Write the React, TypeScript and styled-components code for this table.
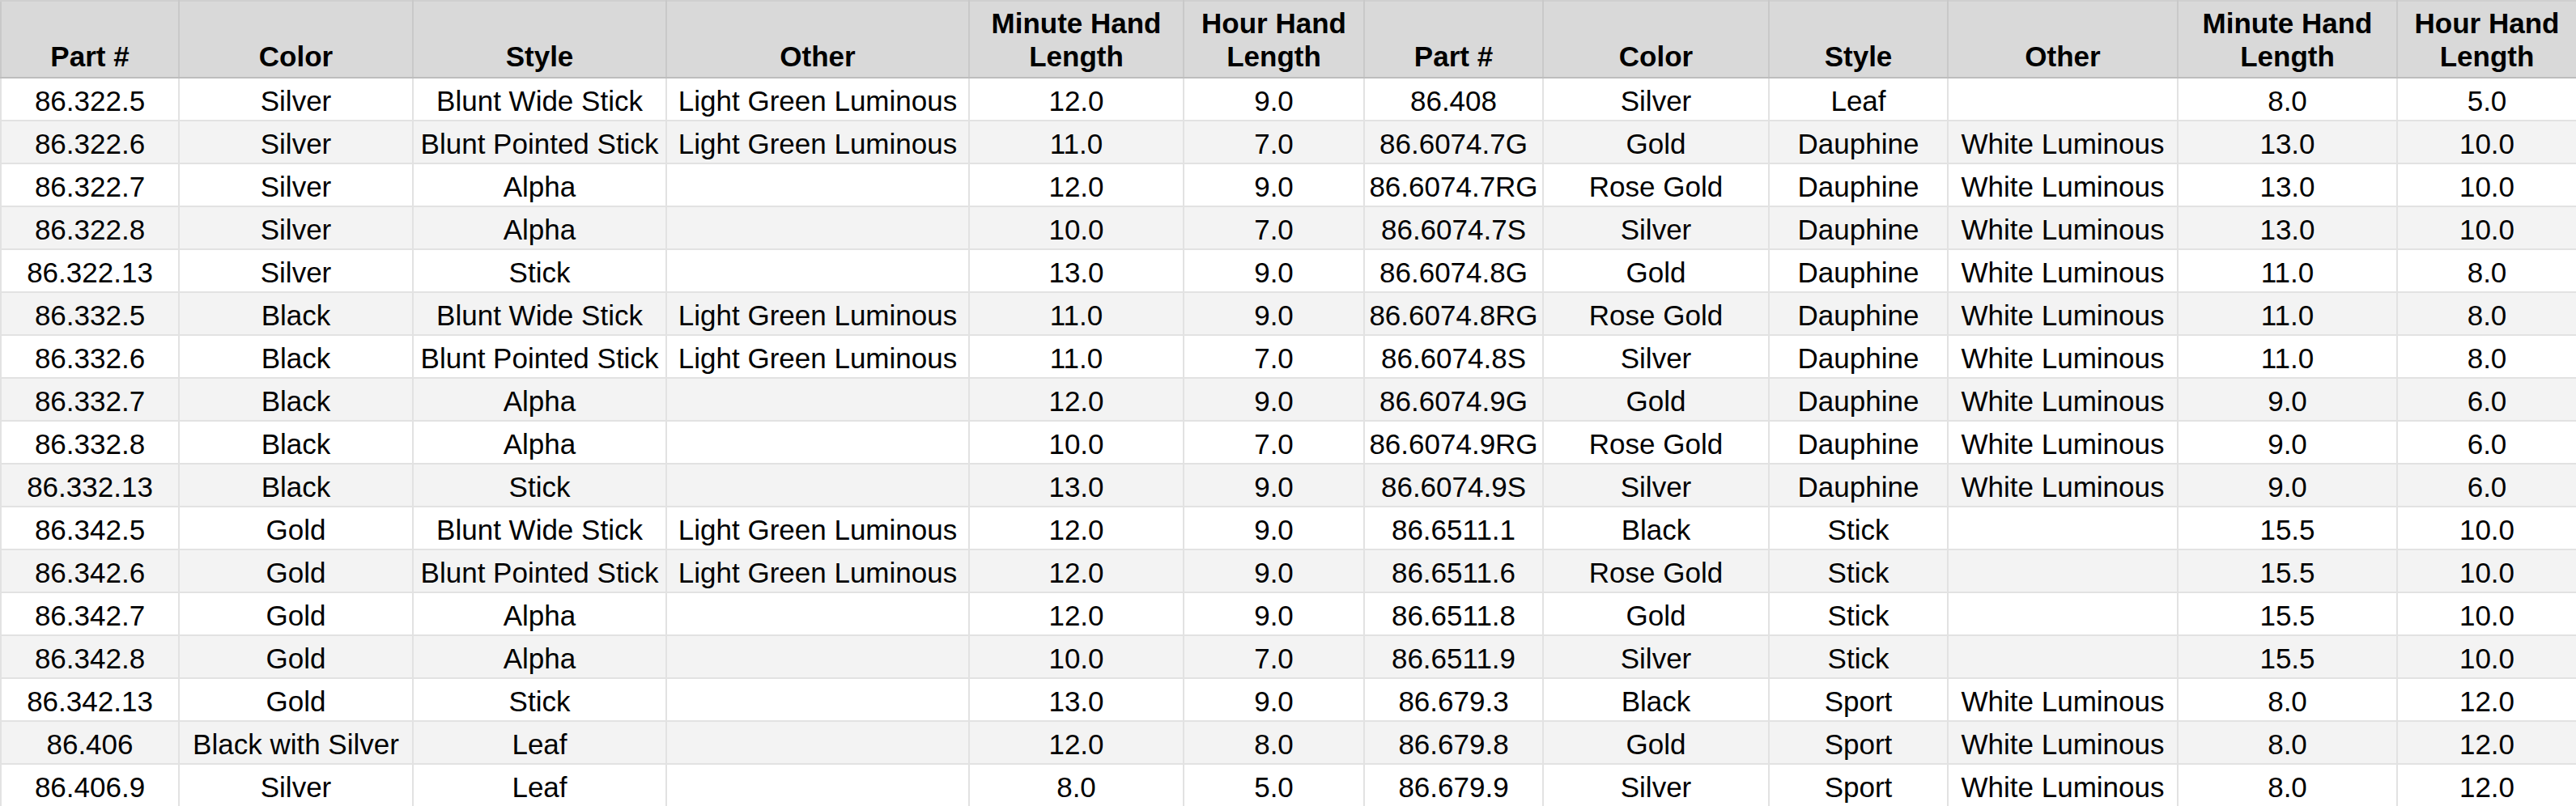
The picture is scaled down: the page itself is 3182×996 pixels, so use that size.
import React from 'react';
import styled, { createGlobalStyle } from 'styled-components';

const GlobalStyle = createGlobalStyle`
  html, body {
    margin: 0;
    padding: 0;
    background: #ffffff;
  }
  body {
    font-family: 'Liberation Sans', Arial, sans-serif;
  }
`;

const columns = [220, 289, 313, 374, 265, 223, 221, 279, 221, 284, 271, 222];

const headers = [
  'Part #',
  'Color',
  'Style',
  'Other',
  'Minute Hand Length',
  'Hour Hand Length',
  'Part #',
  'Color',
  'Style',
  'Other',
  'Minute Hand Length',
  'Hour Hand Length',
];

const LGL = 'Light Green Luminous';
const WL = 'White Luminous';

const left: string[][] = [
  ['86.322.5', 'Silver', 'Blunt Wide Stick', LGL, '12.0', '9.0'],
  ['86.322.6', 'Silver', 'Blunt Pointed Stick', LGL, '11.0', '7.0'],
  ['86.322.7', 'Silver', 'Alpha', '', '12.0', '9.0'],
  ['86.322.8', 'Silver', 'Alpha', '', '10.0', '7.0'],
  ['86.322.13', 'Silver', 'Stick', '', '13.0', '9.0'],
  ['86.332.5', 'Black', 'Blunt Wide Stick', LGL, '11.0', '9.0'],
  ['86.332.6', 'Black', 'Blunt Pointed Stick', LGL, '11.0', '7.0'],
  ['86.332.7', 'Black', 'Alpha', '', '12.0', '9.0'],
  ['86.332.8', 'Black', 'Alpha', '', '10.0', '7.0'],
  ['86.332.13', 'Black', 'Stick', '', '13.0', '9.0'],
  ['86.342.5', 'Gold', 'Blunt Wide Stick', LGL, '12.0', '9.0'],
  ['86.342.6', 'Gold', 'Blunt Pointed Stick', LGL, '12.0', '9.0'],
  ['86.342.7', 'Gold', 'Alpha', '', '12.0', '9.0'],
  ['86.342.8', 'Gold', 'Alpha', '', '10.0', '7.0'],
  ['86.342.13', 'Gold', 'Stick', '', '13.0', '9.0'],
  ['86.406', 'Black with Silver', 'Leaf', '', '12.0', '8.0'],
  ['86.406.9', 'Silver', 'Leaf', '', '8.0', '5.0'],
];

const right: string[][] = [
  ['86.408', 'Silver', 'Leaf', '', '8.0', '5.0'],
  ['86.6074.7G', 'Gold', 'Dauphine', WL, '13.0', '10.0'],
  ['86.6074.7RG', 'Rose Gold', 'Dauphine', WL, '13.0', '10.0'],
  ['86.6074.7S', 'Silver', 'Dauphine', WL, '13.0', '10.0'],
  ['86.6074.8G', 'Gold', 'Dauphine', WL, '11.0', '8.0'],
  ['86.6074.8RG', 'Rose Gold', 'Dauphine', WL, '11.0', '8.0'],
  ['86.6074.8S', 'Silver', 'Dauphine', WL, '11.0', '8.0'],
  ['86.6074.9G', 'Gold', 'Dauphine', WL, '9.0', '6.0'],
  ['86.6074.9RG', 'Rose Gold', 'Dauphine', WL, '9.0', '6.0'],
  ['86.6074.9S', 'Silver', 'Dauphine', WL, '9.0', '6.0'],
  ['86.6511.1', 'Black', 'Stick', '', '15.5', '10.0'],
  ['86.6511.6', 'Rose Gold', 'Stick', '', '15.5', '10.0'],
  ['86.6511.8', 'Gold', 'Stick', '', '15.5', '10.0'],
  ['86.6511.9', 'Silver', 'Stick', '', '15.5', '10.0'],
  ['86.679.3', 'Black', 'Sport', WL, '8.0', '12.0'],
  ['86.679.8', 'Gold', 'Sport', WL, '8.0', '12.0'],
  ['86.679.9', 'Silver', 'Sport', WL, '8.0', '12.0'],
];

const Sheet = styled.table`
  border-collapse: collapse;
  table-layout: fixed;
  width: 3182px;
  color: #000;
  font-family: 'Liberation Sans', Arial, sans-serif;
  font-size: 35px;
`;

const HeadRow = styled.tr`
  height: 95px;
  background: #d9d9d9;
`;

const HeadCell = styled.th<{ $divider?: boolean }>`
  border: 2px solid #c9c9c9;
  border-top-color: #cfcfcf;
  border-bottom-color: #bdbdbd;
  border-left: ${(p) => (p.$divider ? '2px solid #000' : '2px solid #c9c9c9')};
  padding: 0 2px 5px;
  vertical-align: bottom;
  text-align: center;
  font-weight: bold;
  line-height: 41px;
  white-space: normal;
`;

const Row = styled.tr<{ $shade: boolean }>`
  height: 53px;
  background: ${(p) => (p.$shade ? '#f3f3f3' : '#ffffff')};
`;

const Cell = styled.td<{ $divider?: boolean }>`
  border: 2px solid #e2e2e2;
  border-left: ${(p) => (p.$divider ? '2px solid #000' : '2px solid #e2e2e2')};
  padding: 0 0 4px;
  vertical-align: bottom;
  text-align: center;
  line-height: 38px;
  white-space: nowrap;
  overflow: visible;
`;

const App = () => {
  const rows = left.map((l, i) => [...l, ...right[i]]);

  return (
    <>
      <GlobalStyle />
      <Sheet>
        <colgroup>
          {columns.map((w, i) => (
            <col key={i} style={{ width: w }} />
          ))}
        </colgroup>
        <thead>
          <HeadRow>
            {headers.map((h, i) => (
              <HeadCell key={i} $divider={i === 6}>
                {h}
              </HeadCell>
            ))}
          </HeadRow>
        </thead>
        <tbody>
          {rows.map((r, i) => (
            <Row key={i} $shade={i % 2 === 1}>
              {r.map((c, j) => (
                <Cell key={j} $divider={j === 6}>
                  {c}
                </Cell>
              ))}
            </Row>
          ))}
        </tbody>
      </Sheet>
    </>
  );
};

export default App;
